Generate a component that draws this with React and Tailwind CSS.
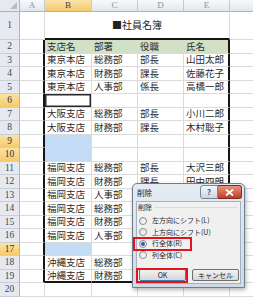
import React from "react";

const JP = "font-['Noto_Sans_CJK_JP','Noto_Sans_CJK_SC',sans-serif]";
const NUM = "font-['Liberation_Serif','DejaVu_Serif',serif]";

// D/E from row 13 down sit under the dialog, so they stay empty
const DATA = {
  2: ["支店名", "部署", "役職", "氏名"],
  3: ["東京本店", "総務部", "部長", "山田太郎"],
  4: ["東京本店", "財務部", "課長", "佐藤花子"],
  5: ["東京本店", "人事部", "係長", "高橋一郎"],
  7: ["大阪支店", "総務部", "部長", "小川二郎"],
  8: ["大阪支店", "財務部", "課長", "木村聡子"],
  11: ["福岡支店", "総務部", "部長", "大沢三郎"],
  12: ["福岡支店", "財務部", "課長", "田中四朗"],
  13: ["福岡支店", "人事部"],
  14: ["福岡支店", "総務部"],
  15: ["福岡支店", "財務部"],
  16: ["福岡支店", "人事部"],
  18: ["沖縄支店", "総務部"],
  19: ["沖縄支店", "財務部"],
};

const WIDTHS = ["w-[47px]", "w-[46px]", "w-[46px]", "w-[46px]"];
const SEL_ROWS = [6, 9, 10, 17];
const BLUE = [9, 10, 17];
const ROWS = Array.from({ length: 19 }, (_, i) => i + 2);

function RowHead({ n }) {
  const sel = SEL_ROWS.includes(n);
  return (
    <div
      className={`w-[20px] shrink-0 h-full flex items-center justify-center border-r border-r-[#a9b4c2] border-b border-b-[#c9cfd7] text-[9.5px] ${NUM} ${
        sel ? "bg-linear-to-b from-[#fbe3a4] to-[#f5ca6c] text-[#333]" : "bg-[#e6eaf0] text-[#3f4650]"
      }`}
    >
      {n}
    </div>
  );
}

function DataRow({ n }) {
  const inTable = n >= 2 && n <= 19;
  const vals = DATA[n] || [];
  return (
    <div className="flex h-[13.5px]">
      <RowHead n={n} />
      <div
        className={`w-[25px] shrink-0 border-b border-b-[#dadada] ${
          inTable ? "border-r-2 border-r-[#161616]" : "border-r border-r-[#dadada]"
        }`}
      />
      {WIDTHS.map((w, c) => {
        const last = c === 3;
        const bottom = n === 19 ? "border-b-2 border-b-[#161616]" : "border-b border-b-[#dadada]";
        const right = last && inTable ? "border-r-2 border-r-[#161616]" : "border-r border-r-[#dadada]";
        let bg = "bg-white";
        if (n === 2) bg = "bg-[#d2e0c6]";
        if (c === 0 && BLUE.includes(n)) bg = "bg-[#c4dbf5]";
        const active = c === 0 && n === 6 ? "shadow-[inset_0_0_0_1.5px_#2a2a2a]" : "";
        return (
          <div
            key={c}
            className={`${w} shrink-0 ${bottom} ${right} ${bg} ${active} flex items-center pl-[2px] whitespace-nowrap text-[9.5px] leading-none text-[#2a2a2a] ${JP}`}
          >
            {vals[c]}
          </div>
        );
      })}
      <div className="flex-1 border-b border-b-[#dadada]" />
    </div>
  );
}

function Radio({ checked, label }) {
  return (
    <div className="flex items-center h-[11.5px] pl-[2px]">
      <span className="w-[8px] h-[8px] shrink-0 rounded-full border border-[#8c8c8c] bg-linear-to-br from-[#dcdcdc] to-white flex items-center justify-center">
        {checked && <span className="w-[4px] h-[4px] rounded-full bg-[#2160b8]" />}
      </span>
      <span className="ml-[5px] text-[7px] leading-none text-[#1e1e1e] whitespace-nowrap">{label}</span>
    </div>
  );
}

function Dialog() {
  return (
    <div
      className={`absolute left-[132px] top-[183px] w-[113px] h-[105px] rounded-t-[5px] border border-[#6e7c8c] bg-linear-to-b from-[#e4ebf3] to-[#cfdae6] shadow-[1px_2px_4px_rgba(0,0,0,0.3)] flex flex-col ${JP}`}
    >
      <div className="h-[17px] flex items-start justify-between">
        <span className="ml-[4px] mt-[5px] text-[7.5px] leading-none text-[#1a1a1a]">削除</span>
        <div className="flex mr-[2px] mt-[1px]">
          <div className="w-[18px] h-[14px] rounded-l-[3px] border border-[#75869a] bg-linear-to-b from-[#f4f7fa] to-[#c9d5e2] flex items-center justify-center text-[8px] font-bold leading-none text-[#4a5a6e]">
            ?
          </div>
          <div className="w-[24px] h-[14px] rounded-r-[3px] border border-l-0 border-[#7a2a1e] bg-linear-to-b from-[#e8937e] to-[#c13a22] flex items-center justify-center">
            <svg width="9" height="7" viewBox="0 0 9 7">
              <path d="M1 0.5 L8 6.5 M8 0.5 L1 6.5" stroke="#fff" strokeWidth="1.8" />
            </svg>
          </div>
        </div>
      </div>
      <div className="flex-1 mx-[3px] mb-[3px] bg-[#f0f0f0] border border-[#a3b1c0] flex flex-col">
        <div className="flex items-center mt-[2px] ml-[1px]">
          <span className="text-[7px] leading-none text-[#1e1e1e]">削除</span>
          <div className="flex-1 h-px bg-[#dcdcdc] ml-[2px] mr-[2px]" />
        </div>
        <div className="mt-[4px] flex flex-col">
          <Radio label="左方向にシフト(L)" />
          <Radio label="上方向にシフト(U)" />
          <Radio label="行全体(R)" checked />
          <Radio label="列全体(C)" />
        </div>
        <div className="mt-[8px] flex gap-[6px] pl-[2px]">
          <div className="w-[47px] h-[12px] rounded-[2px] border border-[#3c7fb1] bg-linear-to-b from-[#f2f2f2] to-[#d8d8d8] flex items-center justify-center text-[7px] leading-none text-[#1e1e1e]">
            OK
          </div>
          <div className="w-[47px] h-[12px] rounded-[2px] border border-[#707070] bg-linear-to-b from-[#f2f2f2] to-[#d8d8d8] flex items-center justify-center text-[7px] leading-none text-[#1e1e1e]">
            キャンセル
          </div>
        </div>
      </div>
      <div className="absolute left-[0px] top-[53px] w-[59px] h-[14px] border-2 border-[#e3141c]" />
      <div className="absolute left-[3px] top-[84px] w-[52px] h-[15px] border-2 border-[#e3141c]" />
    </div>
  );
}

export default function App() {
  const cols = ["A", "B", "C", "D", "E"];
  const colW = ["w-[25px]", ...WIDTHS];
  return (
    <div className="relative w-[253px] h-[300px] overflow-hidden bg-white">
      {/* column headers */}
      <div className="flex h-[12px]">
        <div className="w-[20px] shrink-0 bg-[#e6eaf0] border-r border-r-[#a9b4c2] border-b border-b-[#a9b4c2] flex items-end justify-end pr-[2px] pb-[2px]">
          <svg width="7" height="7" viewBox="0 0 7 7">
            <path d="M7 0 L7 7 L0 7 Z" fill="#b4bcc7" />
          </svg>
        </div>
        {cols.map((c, i) => (
          <div
            key={c}
            className={`${colW[i]} shrink-0 border-r border-r-[#c3cad3] border-b border-b-[#a9b4c2] flex items-center justify-center text-[9px] leading-none ${NUM} ${
              c === "B"
                ? "bg-linear-to-b from-[#fbe5a9] to-[#f4c86a] text-[#444]"
                : "bg-linear-to-b from-[#f7f9fb] to-[#e2e7ed] text-[#8a93a0]"
            }`}
          >
            {c}
          </div>
        ))}
        <div className="flex-1 bg-linear-to-b from-[#f7f9fb] to-[#e2e7ed] border-b border-b-[#a9b4c2]" />
      </div>

      {/* row 1 with title */}
      <div className="flex h-[28px]">
        <RowHead n={1} />
        <div className="w-[25px] shrink-0 border-r border-r-[#dadada] border-b border-b-[#dadada]" />
        <div
          className={`w-[185px] shrink-0 border-b-2 border-b-[#161616] border-r border-r-[#dadada] flex items-center justify-center text-[10px] leading-none text-[#222] ${JP}`}
        >
          ■社員名簿
        </div>
        <div className="flex-1 border-b border-b-[#dadada]" />
      </div>

      {ROWS.map((n) => (
        <DataRow key={n} n={n} />
      ))}

      <Dialog />
    </div>
  );
}
